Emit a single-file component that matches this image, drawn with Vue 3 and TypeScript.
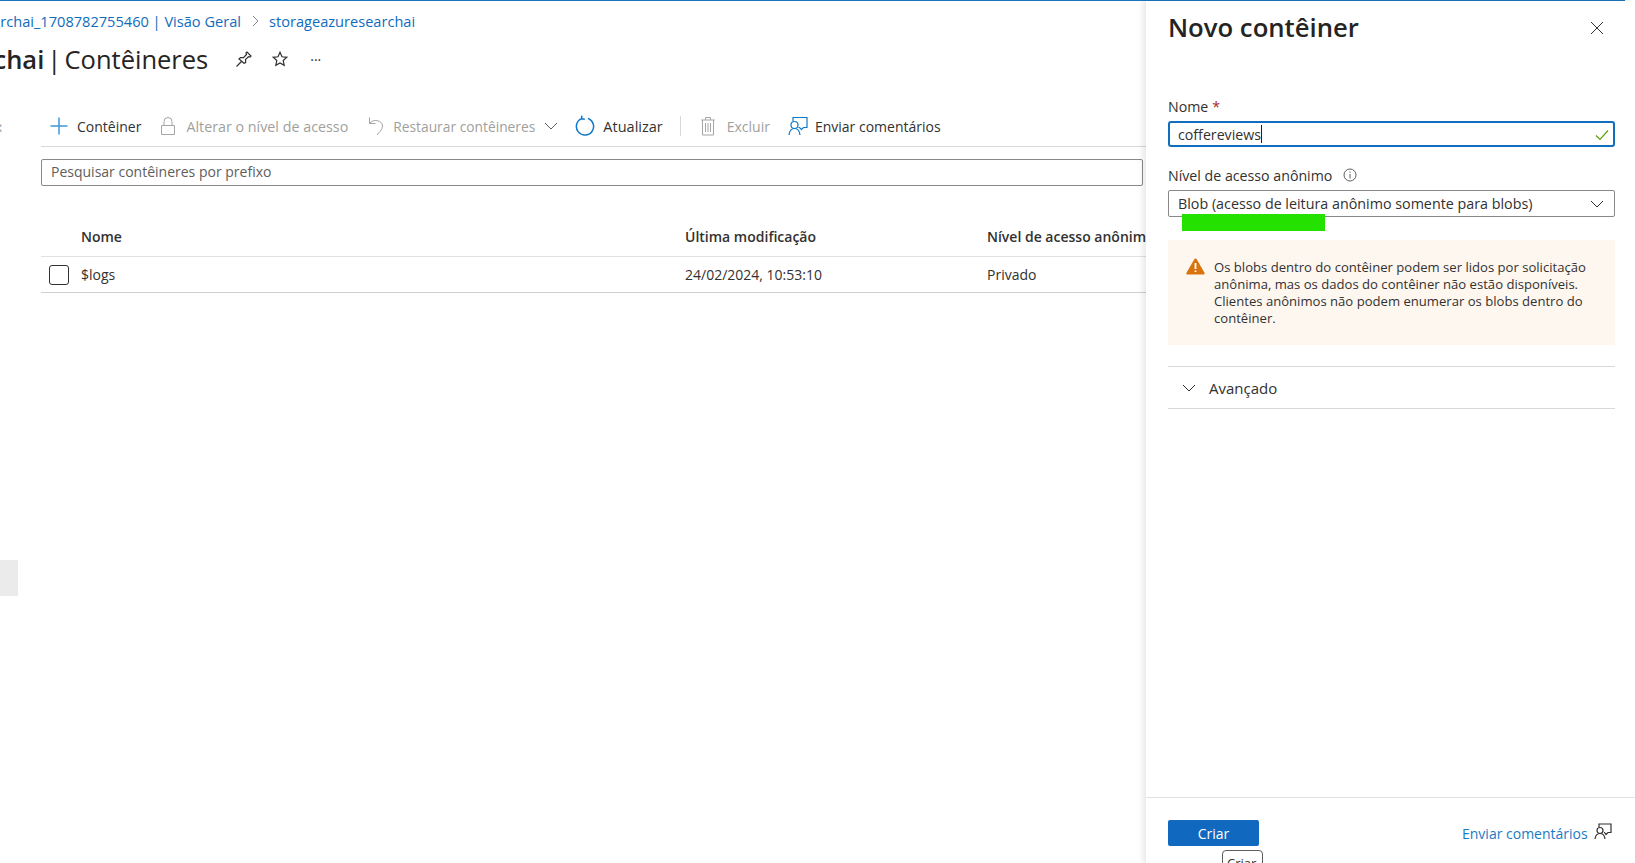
<template>
  <div class="page">
    <div class="top-line"></div>
    <div class="body">
      <main class="blade">
        <nav class="crumbs">
          <a>searchai_1708782755460 | Visão Geral</a>
          <svg class="crumb-sep" width="10" height="12" viewBox="0 0 10 12"><path d="M2 1l5 5-5 5" /></svg>
          <a>storageazuresearchai</a>
        </nav>
        <div class="title-row">
          <h1><b>storageazuresearchai</b> | Contêineres</h1>
          <svg class="title-icon pin" width="18" height="18" viewBox="0 0 18 18">
            <path d="M1.500 16.500l5-5M4 9l1.500-1.500 3 .2 3-3.200L11 3l1-1 4 4-1 1-1.500-.4-3 3 .2 3L9 13.200z" />
          </svg>
          <svg class="title-icon star" width="18" height="18" viewBox="0 0 18 18">
            <path d="M9 2.300l2 4.500 4.800.5-3.600 3.200 1 4.800L9 12.900l-4.200 2.400 1-4.800L2.200 7.300 7 6.800z" />
          </svg>
          <span class="more">···</span>
        </div>
        <span class="collapse-mark">‹</span>

        <div class="toolbar">
          <button class="tool tool-add">
            <svg width="18" height="18" viewBox="0 0 18 18"><path class="blue plus" d="M9 .5v17M.5 9h17" /></svg>
            Contêiner
          </button>
          <button class="tool off tool-lock">
            <svg width="16" height="20" viewBox="0 0 16 20"><path class="grey" d="M1.500 9.500h13v9h-13zM4 9.500V5.500a4 4 0 018 0v4" /></svg>
            Alterar o nível de acesso
          </button>
          <button class="tool off tool-undo">
            <svg width="16" height="20" viewBox="0 0 16 20"><path class="grey" d="M1.500 1.500v6h6M1.500 7.500C5 2.500 14.500 4 14.500 10c0 3.500-3 6-5.500 9" /></svg>
            Restaurar contêineres
            <svg class="caret" width="14" height="8" viewBox="0 0 14 8"><path d="M1 1l6 6 6-6" /></svg>
          </button>
          <button class="tool tool-refresh">
            <svg width="20" height="22" viewBox="0 0 20 22"><path class="blue thick" d="M6.500 3.600A8.600 8.600 0 1013 3.400M6.800 .6l-.2 3.200 3.200.4" /></svg>
            Atualizar
          </button>
          <span class="tool-sep"></span>
          <button class="tool off tool-trash">
            <svg width="16" height="20" viewBox="0 0 16 20"><path class="grey" d="M1 4h14M5.500 4V1.500h5V4M2.500 4v15h11V4M5.500 7v9M8 7v9M10.500 7v9" /></svg>
            Excluir
          </button>
          <button class="tool tool-feedback">
            <svg width="20" height="20" viewBox="0 0 20 20">
              <path class="blue fb" d="M5 5V1.500h14v10h-3.500l-2 2-2-2h-1" />
              <circle class="blue fb" cx="6.500" cy="9" r="3.500" />
              <path class="blue fb" d="M1 19c.5-4 2.500-6.500 5.500-6.500S11.500 15 12 19" />
            </svg>
            Enviar comentários
          </button>
        </div>

        <div class="search">Pesquisar contêineres por prefixo</div>

        <div class="table-head">
          <span class="col-name">Nome</span>
          <span class="col-date">Última modificação</span>
          <span class="col-access">Nível de acesso anônimo</span>
        </div>
        <div class="table-row">
          <span class="check"></span>
          <span class="col-name">$logs</span>
          <span class="col-date">24/02/2024, 10:53:10</span>
          <span class="col-access">Privado</span>
        </div>

        <div class="side-block"></div>
      </main>

      <aside class="panel">
        <div class="panel-main">
          <header class="panel-head">
            <h2>Novo contêiner</h2>
            <svg class="close" width="14" height="14" viewBox="0 0 14 14"><path d="M1 1l12 12M13 1L1 13" /></svg>
          </header>

          <label class="field-label first">Nome <em>*</em></label>
          <div class="name-input">
            <span>coffereviews</span><i class="cursor"></i>
            <svg class="ok" width="14" height="12" viewBox="0 0 14 12"><path d="M1 6.500l4 4L13 1.500" /></svg>
          </div>

          <label class="field-label second">
            Nível de acesso anônimo
            <svg class="info" width="14" height="14" viewBox="0 0 14 14">
              <circle cx="7" cy="7" r="6" />
              <path d="M7 6v4.500M7 3.500v1.200" />
            </svg>
          </label>
          <div class="select">
            <span>Blob (acesso de leitura anônimo somente para blobs)</span>
            <svg width="14" height="8" viewBox="0 0 14 8"><path d="M1 1l6 6 6-6" /></svg>
            <span class="marker"></span>
          </div>

          <div class="warning">
            <svg width="19" height="17" viewBox="0 0 19 17">
              <path d="M9.500 .5c.5 0 .9.300 1.200.8l7.800 13.400c.5.900-.1 1.800-1.100 1.800H1.600c-1 0-1.600-.9-1.100-1.800L8.300 1.300c.3-.5.700-.8 1.200-.8z" fill="#d9730d" />
              <path d="M9.500 5v6M9.500 12.500v1.500" stroke="#fff" stroke-width="1.800" />
            </svg>
            <p>Os blobs dentro do contêiner podem ser lidos por solicitação anônima, mas os dados do contêiner não estão disponíveis. Clientes anônimos não podem enumerar os blobs dentro do contêiner.</p>
          </div>

          <div class="advanced">
            <svg width="14" height="8" viewBox="0 0 14 8"><path d="M1 1l6 6 6-6" /></svg>
            Avançado
          </div>
        </div>

        <footer class="panel-foot">
          <button class="create">Criar</button>
          <a class="foot-link">Enviar comentários</a>
          <svg class="foot-icon" width="18" height="17" viewBox="0 0 18 17">
            <path d="M5 4V1h12v8.500h-3l-2 2-1.500-2H10" />
            <circle cx="6" cy="7.500" r="3" />
            <path d="M1 16c.4-3.500 2.300-5.500 5-5.500s4.600 2 5 5.500" />
          </svg>
          <span class="tip">Criar</span>
        </footer>
      </aside>
    </div>
  </div>
</template>

<script setup lang="ts">
</script>

<style>
html, body {
  margin: 0;
  background: #fff;
  overflow: hidden;
}
</style>

<style scoped>
.page {
  height: 863px;
  overflow: hidden;
  font-family: "Open Sans", "Liberation Sans", sans-serif;
  font-size: 14px;
  color: #323130;
  position: relative;
}

.top-line {
  height: 1px;
  width: 1625px;
  background: #1b75bc;
}

.body {
  display: flex;
  height: 862px;
}

.blade {
  width: 1146px;
  flex: none;
  overflow: hidden;
  position: relative;
}

.crumbs {
  display: flex;
  align-items: center;
  height: 20px;
  margin: 10px 0 0 -23px;
  white-space: nowrap;
  font-size: 14.600px;
  color: #0f6cbd;
}

.crumb-sep {
  margin: 0 8px 0 10px;
  flex: none;
}

.crumb-sep path {
  fill: none;
  stroke: #8a8886;
  stroke-width: 1;
}

.title-row {
  display: flex;
  align-items: center;
  height: 40px;
  margin: 8px 0 0 -221px;
  white-space: nowrap;
}

h1 {
  margin: 0;
  font-size: 25.500px;
  font-weight: 400;
  word-spacing: -3.500px;
  color: #252423;
}

h1 b {
  font-weight: 600;
}

.title-icon {
  flex: none;
}

.title-icon path {
  fill: none;
  stroke: #323130;
  stroke-width: 1.200;
}

.pin {
  margin-left: 27px;
}

.star {
  margin-left: 18px;
}

.more {
  margin-left: 21px;
  font-size: 14px;
}

.collapse-mark {
  position: absolute;
  left: -3px;
  top: 113px;
  font-size: 18px;
  color: #a19f9d;
}

.toolbar {
  display: flex;
  align-items: center;
  height: 40px;
  margin: 27px 0 0 41px;
  border-bottom: 1px solid #d8d8d8;
  white-space: nowrap;
}

.tool {
  display: flex;
  align-items: center;
  padding: 0;
  border: 0;
  background: none;
  font: inherit;
  color: #323130;
  gap: 9px;
}

.tool.off {
  color: #a19f9d;
}

.tool svg {
  flex: none;
}

.tool svg path,
.tool svg circle {
  fill: none;
  stroke-width: 1;
}

.blue {
  stroke: #0f78c9;
}

.plus {
  stroke: #3f97d6;
  stroke-width: 1.500 !important;
}

.thick {
  stroke-width: 1.500 !important;
}

.fb {
  stroke-width: 1.200 !important;
}

.grey {
  stroke: #a6a6a6;
}

.caret path {
  stroke: #605e5c;
}

.tool-add {
  margin-left: 9px;
}

.tool-lock {
  margin-left: 19px;
  gap: 10px;
  font-size: 14.300px;
}

.tool-undo {
  margin-left: 20px;
  font-size: 13.800px;
}

.tool-refresh {
  margin-left: 17px;
  gap: 8px;
  font-size: 14.500px;
}

.tool-sep {
  width: 1px;
  height: 20px;
  margin-left: 17px;
  background: #d8d8d8;
}

.tool-trash {
  margin-left: 19px;
  gap: 11px;
}

.tool-feedback {
  margin-left: 18px;
  gap: 7px;
}

.search {
  box-sizing: border-box;
  height: 27px;
  margin: 12px 0 0 41px;
  width: 1102px;
  padding-left: 9px;
  line-height: 24px;
  border: 1px solid #8a8886;
  border-radius: 2px;
  color: #605e5c;
}

.table-head,
.table-row {
  display: flex;
  align-items: center;
  margin-left: 41px;
  white-space: nowrap;
  border-bottom: 1px solid #e1e1e1;
  position: relative;
}

.table-head {
  height: 40px;
  margin-top: 30px;
  font-weight: 600;
  color: #323130;
}

.table-row {
  height: 35px;
  border-bottom-color: #d0d0d0;
}

.col-name {
  position: absolute;
  left: 40px;
}

.col-date {
  position: absolute;
  left: 644px;
}

.col-access {
  position: absolute;
  left: 946px;
}

.check {
  position: absolute;
  left: 8px;
  top: 8px;
  box-sizing: border-box;
  width: 20px;
  height: 20px;
  border: 1px solid #323130;
  border-radius: 3px;
}

.side-block {
  position: absolute;
  left: 0;
  top: 559px;
  width: 18px;
  height: 36px;
  background: #ebebeb;
}

.panel {
  flex: 1;
  display: flex;
  flex-direction: column;
  position: relative;
  background: #fff;
  box-shadow: -3px 0 6px rgba(0, 0, 0, 0.1);
}

.panel-main {
  flex: 1;
  padding: 0 20px 0 22px;
}

.panel-head {
  display: flex;
  justify-content: space-between;
  align-items: center;
  height: 54px;
}

h2 {
  margin: -1px 0 0;
  font-size: 25.700px;
  font-weight: 600;
  color: #252423;
}

.close {
  margin-right: 11px;
}

.close path {
  fill: none;
  stroke: #323130;
  stroke-width: 1;
}

.field-label {
  display: flex;
  align-items: center;
  gap: 4px;
  height: 20px;
  font-size: 14.200px;
}

.field-label em {
  font-style: normal;
  color: #a4262c;
}

.first {
  margin-top: 41px;
}

.second {
  margin-top: 18px;
}

.info {
  margin-left: 7px;
}

.info circle,
.info path {
  fill: none;
  stroke: #605e5c;
  stroke-width: 1;
}

.name-input,
.select {
  box-sizing: border-box;
  display: flex;
  align-items: center;
  position: relative;
  padding-left: 9px;
  border-radius: 2px;
}

.name-input {
  height: 26px;
  margin-top: 5px;
  border: 2px solid #106ebe;
  padding-left: 8px;
  border-radius: 3px;
  font-size: 14.200px;
}

.cursor {
  width: 1px;
  height: 18px;
  background: #201f1e;
}

.ok {
  position: absolute;
  right: 4px;
  top: 6px;
}

.ok path {
  fill: none;
  stroke: #57a300;
  stroke-width: 1.200;
}

.select {
  height: 27px;
  margin-top: 5px;
  border: 1px solid #8a8886;
  justify-content: space-between;
  padding-right: 10px;
  font-size: 14.300px;
}

.select svg path,
.advanced svg path {
  fill: none;
  stroke: #323130;
  stroke-width: 1;
}

.marker {
  position: absolute;
  left: 13px;
  top: 23px;
  width: 143px;
  height: 17px;
  background: #25e100;
}

.warning {
  display: flex;
  gap: 9px;
  box-sizing: border-box;
  height: 105px;
  margin-top: 23px;
  padding: 18px 20px 0 18px;
  background: #fef7f0;
}

.warning svg {
  flex: none;
}

.warning p {
  margin: 1px 0 0;
  font-size: 13.100px;
  line-height: 17px;
}

.advanced {
  display: flex;
  align-items: center;
  gap: 13px;
  box-sizing: border-box;
  height: 43px;
  margin-top: 21px;
  padding-left: 14px;
  border-top: 1px solid #d8d8d8;
  border-bottom: 1px solid #d8d8d8;
  font-size: 15px;
}

.panel-foot {
  display: flex;
  align-items: flex-start;
  height: 66px;
  flex: none;
  padding: 22px 0 0 22px;
  box-sizing: border-box;
  border-top: 1px solid #e1e1e1;
  position: relative;
}

.create {
  width: 91px;
  height: 26px;
  padding: 0;
  border: 0;
  border-radius: 2px;
  background: #1069bf;
  color: #fff;
  font: inherit;
  font-size: 14px;
}

.foot-link {
  margin: 4px 0 0 203px;
  color: #1a7ac4;
  white-space: nowrap;
}

.foot-icon {
  margin: 3px 0 0 6px;
  flex: none;
}

.foot-icon path,
.foot-icon circle {
  fill: none;
  stroke: #323130;
  stroke-width: 1.200;
}

.tip {
  position: absolute;
  left: 76px;
  top: 52px;
  box-sizing: border-box;
  width: 41px;
  height: 30px;
  padding: 3px 0 0 4px;
  background: #fff;
  border: 1px solid #605e5c;
  border-radius: 4px;
  font-size: 13px;
}
</style>
